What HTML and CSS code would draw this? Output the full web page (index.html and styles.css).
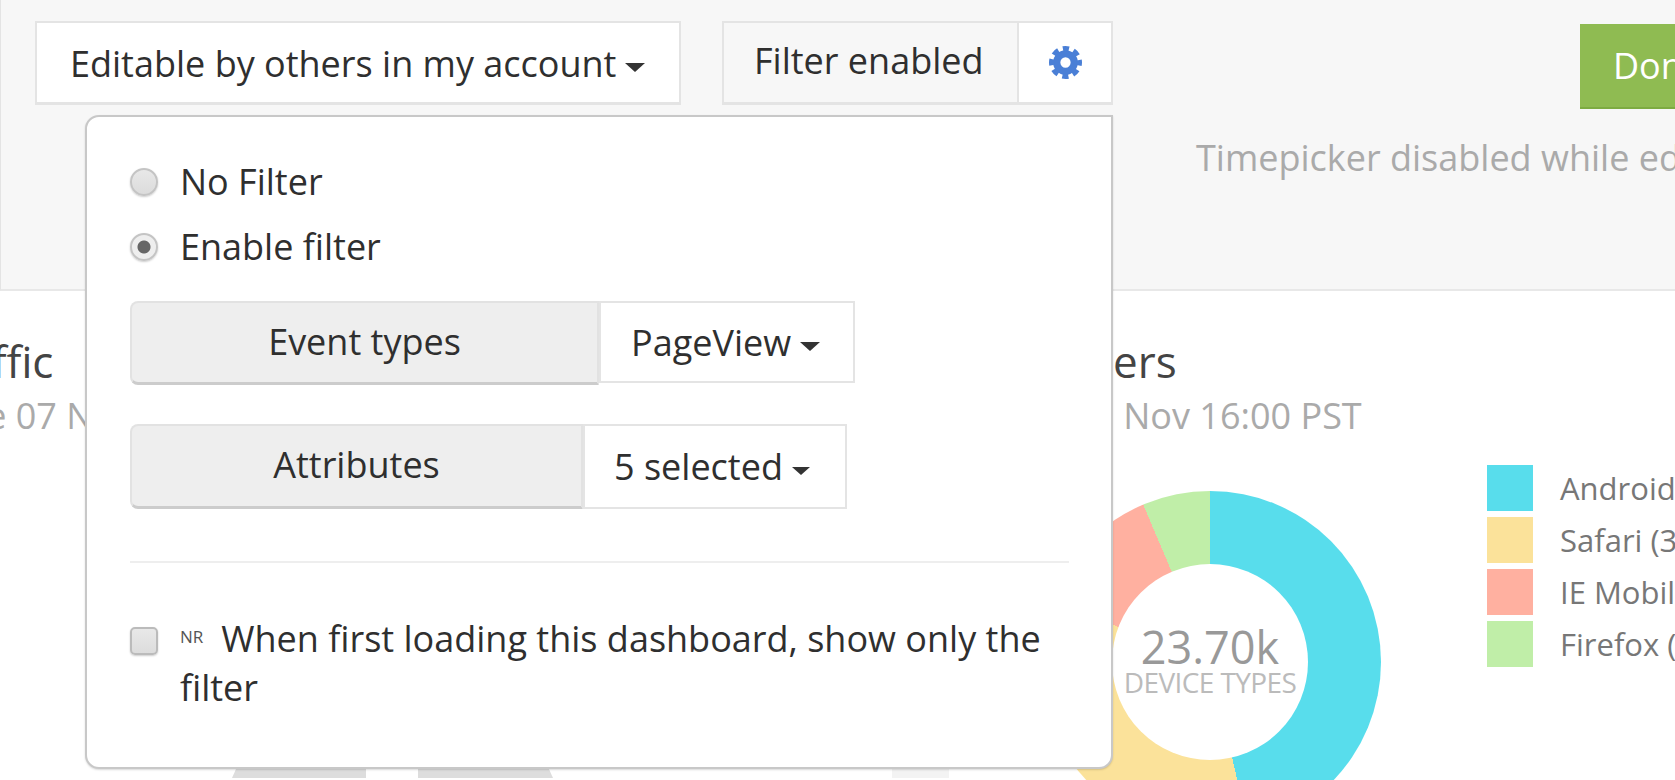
FILE: index.html
```html
<!DOCTYPE html>
<html lang="en">
<head>
<meta charset="utf-8">
<title>Dashboard filter</title>
<link rel="stylesheet" href="styles.css">
</head>
<body>
<header class="toolbar">
  <button class="btn btn-share">Editable by others in my account<span class="caret"></span></button>
  <div class="filter-group">
    <span class="filter-label">Filter enabled</span>
    <span class="filter-gear">
      <svg class="gear" viewBox="0 0 32 32" aria-hidden="true">
        <circle cx="16" cy="16" r="8.5" fill="none" stroke="#4a7fd6" stroke-width="7"/>
        <circle cx="16" cy="16" r="13.5" fill="none" stroke="#4a7fd6" stroke-width="5" stroke-dasharray="6 4.603" stroke-dashoffset="3"/>
      </svg>
    </span>
  </div>
  <div class="time-col">
    <button class="btn-done">Done</button>
    <p class="time-note">Timepicker disabled while editing</p>
  </div>
</header>

<main class="content">
  <section class="panel panel-traffic">
    <h2 class="panel-title">Traffic</h2>
    <p class="panel-date">Since 07 Nov 16:00 PST</p>
    <div class="monitors">
      <span class="monitor monitor-left"></span>
      <span class="monitor monitor-right"></span>
      <span class="monitor monitor-pale"></span>
    </div>
  </section>
  <section class="panel panel-devices">
    <h2 class="panel-title">Browsers</h2>
    <p class="panel-date">Since 07 Nov 16:00 PST</p>
    <div class="chart-row">
      <div class="donut">
        <div class="donut-hole">
          <span class="donut-value">23.70k</span>
          <span class="donut-label">DEVICE TYPES</span>
        </div>
      </div>
      <ul class="legend">
        <li class="legend-item"><span class="swatch swatch-android"></span>Android</li>
        <li class="legend-item"><span class="swatch swatch-safari"></span>Safari (3</li>
        <li class="legend-item"><span class="swatch swatch-ie"></span>IE Mobil</li>
        <li class="legend-item"><span class="swatch swatch-firefox"></span>Firefox (</li>
      </ul>
    </div>
  </section>
</main>

<aside class="popover">
  <label class="radio-row"><input class="radio" type="radio" name="f">No Filter</label>
  <label class="radio-row"><input class="radio" type="radio" name="f" checked>Enable filter</label>
  <div class="input-group group-event">
    <span class="addon addon-event">Event types</span>
    <span class="select select-event">PageView<span class="caret"></span></span>
  </div>
  <div class="input-group group-attr">
    <span class="addon addon-attr">Attributes</span>
    <span class="select select-attr">5 selected<span class="caret caret-sm"></span></span>
  </div>
  <hr class="divider">
  <label class="check-row">
    <input class="check" type="checkbox">
    <span class="check-text"><sup class="nr">NR</sup>When first loading this dashboard, show only the filter</span>
  </label>
</aside>
</body>
</html>
```
FILE: styles.css
```css
* { box-sizing: border-box; }
html, body { margin: 0; height: 780px; overflow: hidden; }
body {
  position: relative;
  background: #fff;
  font-family: "Open Sans", "Liberation Sans", sans-serif;
  color: #2f2f2f;
  font-size: 36px;
}
button { font: inherit; color: inherit; }

/* toolbar */
.toolbar {
  height: 291px;
  display: flex;
  align-items: flex-start;
  padding: 21px 0 0 34px;
  background: #f7f7f7;
  border-bottom: 2px solid #e8e8e8;
  border-left: 1px solid #e4e4e4;
}
.btn {
  height: 84px;
  width: 646px;
  padding: 2px 0 0 33px;
  text-align: left;
  background: #fff;
  border: 2px solid #e4e4e4;
  border-bottom-width: 3px;
  white-space: nowrap;
  flex: none;
}
.caret {
  display: inline-block;
  margin-left: 9px;
  border-top: 9px solid #333;
  border-left: 10px solid transparent;
  border-right: 10px solid transparent;
  vertical-align: 5px;
}
.caret-sm { border-top-width: 8px; border-left-width: 9px; border-right-width: 9px; }
.filter-group {
  display: flex;
  height: 84px;
  margin-left: 41px;
  border: 2px solid #e4e4e4;
  border-bottom-width: 3px;
  flex: none;
}
.filter-label {
  width: 295px;
  padding: 16px 0 0 30px;
  line-height: 44px;
  white-space: nowrap;
  border-right: 2px solid #e4e4e4;
}
.filter-gear {
  width: 92px;
  background: #fff;
  display: flex;
  align-items: center;
  justify-content: center;
}
.gear { width: 33px; height: 33px; }
.time-col {
  flex: none;
  margin-left: 83px;
  white-space: nowrap;
}
.btn-done {
  display: block;
  width: 200px;
  height: 85px;
  margin: 3px 0 0 384px;
  padding: 0 0 0 33px;
  text-align: left;
  background: #8fbb52;
  color: #fff;
  border: 0;
  border-bottom: 2px solid #7dab42;
}
.time-note {
  margin: 27px 0 0;
  color: #aaa;
  line-height: 44px;
}

/* background panels */
.content {
  display: flex;
  height: 489px;
  overflow: hidden;
}
.panel { flex: none; }
.panel-title {
  margin: 0;
  font-size: 44px;
  font-weight: 400;
  line-height: 54px;
  padding-bottom: 6px;
  color: #444;
}
.panel-date {
  margin: 0;
  color: #aaa;
  line-height: 44px;
}
.panel-traffic {
  width: 830px;
  margin-left: -82px;
  padding-top: 43px;
}
.panel-traffic .panel-title { margin-left: 7px; }
.panel-devices .panel-title { margin-left: 10px; }
.monitors {
  display: flex;
  margin: 325px 0 0 314px;
}
.monitor {
  flex: none;
  height: 15px;
  background: #ddd;
}
.monitor-left {
  width: 134px;
  clip-path: polygon(5% 0, 100% 0, 100% 100%, 0 100%);
}
.monitor-right {
  width: 135px;
  margin-left: 52px;
  clip-path: polygon(0 0, 95% 0, 100% 100%, 0 100%);
}
.monitor-pale {
  width: 57px;
  margin-left: 339px;
  background: #f3f3f3;
}
.panel-devices {
  width: 1000px;
  margin-left: 227px;
  padding-top: 43px;
}
.chart-row {
  display: flex;
  align-items: flex-start;
  margin: 38px 0 0 64px;
}
.donut {
  flex: none;
  width: 342px;
  height: 342px;
  margin-top: 15px;
  border-radius: 50%;
  background: conic-gradient(#58ddec 0 167deg, #fbe29a 167deg 291deg, #ffb0a0 291deg 337deg, #c0eea8 337deg 360deg);
  display: flex;
  align-items: center;
  justify-content: center;
}
.donut-hole {
  width: 196px;
  height: 196px;
  border-radius: 50%;
  background: #fff;
  display: flex;
  flex-direction: column;
  align-items: center;
  justify-content: center;
}
.donut-value { font-size: 45px; line-height: 44px; color: #999; margin-top: -5px; }
.donut-label { font-size: 28px; line-height: 26px; color: #bbb; letter-spacing: -.6px; white-space: nowrap; }
.legend {
  list-style: none;
  margin: -14px 0 0 106px;
  padding: 0;
}
.legend-item {
  display: flex;
  align-items: center;
  gap: 27px;
  height: 52px;
  font-size: 31px;
  color: #777;
  white-space: nowrap;
}
.swatch { flex: none; width: 46px; height: 46px; }
.swatch-android { background: #58ddec; }
.swatch-safari { background: #fbe29a; }
.swatch-ie { background: #ffb0a0; }
.swatch-firefox { background: #c0eea8; }

/* popover */
.popover {
  position: absolute;
  left: 85px;
  top: 115px;
  width: 1028px;
  height: 654px;
  padding: 32px 42px 0 43px;
  background: #fff;
  border: 2px solid #c8c8c8;
  border-radius: 14px 0 14px 14px;
  box-shadow: 0 1px 2px rgba(0,0,0,.15);
}
.radio-row {
  display: flex;
  align-items: center;
  gap: 22px;
  height: 65px;
}
.radio, .check {
  appearance: none;
  flex: none;
  margin: 0;
  width: 28px;
  height: 28px;
  background: linear-gradient(#e8e8e8, #dcdcdc);
  border: 2px solid #c4c4c4;
  box-shadow: 0 1px 2px rgba(0,0,0,.2);
}
.radio { border-radius: 50%; }
.radio:checked {
  background: radial-gradient(circle, #666 0 6px, #eee 7px);
}
.check { border-radius: 5px; border-color: #bbb; margin-top: 13px; }
.input-group { display: flex; align-items: flex-start; }
.group-event { margin-top: 22px; }
.group-attr { margin-top: 39px; }
.addon {
  flex: none;
  background: #eee;
  border: 2px solid #e2e2e2;
  border-bottom: 3px solid #ccc;
  border-radius: 8px 0 0 8px;
  text-align: center;
}
.addon-event { width: 469px; height: 84px; line-height: 78px; }
.addon-attr { width: 453px; height: 85px; line-height: 78px; }
.select {
  flex: none;
  background: #fff;
  border: 2px solid #e4e4e4;
  white-space: nowrap;
}
.select-event { width: 256px; height: 82px; line-height: 80px; padding-left: 30px; }
.select-attr { width: 264px; height: 85px; line-height: 82px; padding-left: 29px; }
.divider {
  margin: 52px 0 0;
  border: 0;
  border-top: 2px solid #eee;
}
.check-row {
  display: flex;
  align-items: flex-start;
  gap: 22px;
  margin-top: 51px;
  line-height: 49px;
}
.nr { font-size: 17px; color: #555; line-height: 0; vertical-align: 9px; margin-right: 18px; }
```
